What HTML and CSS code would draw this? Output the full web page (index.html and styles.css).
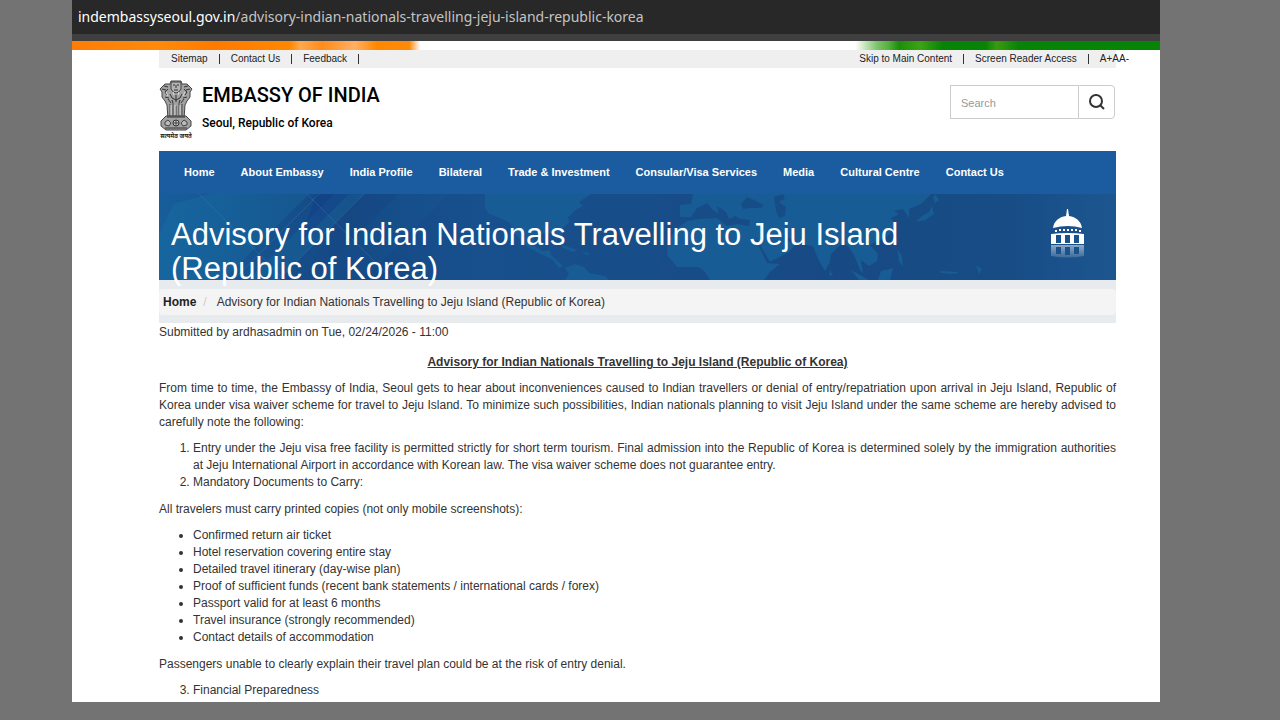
FILE: index.html
```html
<!DOCTYPE html>
<html lang="en">
<head>
  <meta charset="UTF-8">
  <meta name="viewport" content="width=device-width, initial-scale=1.0">
  <title>Embassy of India, Seoul</title>
  <link rel="stylesheet" href="styles.css">
</head>
<body>
  <div class="window">
    <div class="address"><span class="host">indembassyseoul.gov.in</span>/advisory-indian-nationals-travelling-jeju-island-republic-korea</div>
    <div class="flag"></div>

    <div class="container">
      <div class="topbar">
        <div class="links">
          <a href="#">Sitemap</a><a href="#">Contact Us</a><a href="#">Feedback</a>
        </div>
        <div class="links tools">
          <a href="#main">Skip to Main Content</a><a href="#">Screen Reader Access</a><span class="sizes"><a href="#">A+</a><a href="#">A</a><a href="#">A-</a></span>
        </div>
      </div>

      <header class="header">
        <a class="brand" href="#">
          <svg class="emblem" viewBox="0 0 34 60" aria-hidden="true">
            <g fill="#a2a2a2" stroke="#444" stroke-width="1">
              <path d="M6 4 L11 4 L12 1 H22 L23 4 L28 4 L33 9 L31 12 L31 17 L28 21 L26 25 L25 39 H9 L8 25 L6 21 L3 17 L3 12 L1 9 Z"/>
              <path d="M7 36 H27 L32 41 V46 L27 50 H7 L2 46 V41 Z"/>
            </g>
            <path d="M12 2 H22 V9 Q20 13 17 13 Q14 13 12 9 Z" fill="#b4b4b4" stroke="#444"/>
            <path d="M14 5h2M18 5h2M17 5v3M15 10h4M5 6l4 1M29 6l-4 1M3 9l4 1M31 9l-4 1M9 9l-3 3 2 3M25 9l3 3-2 3M11 14l2 4 4 2 4-2 2-4M6 17l4 1M28 17l-4 1M9 19l3 4M25 19l-3 4M13 20l1 3M21 20l-1 3M17 15v7" fill="none" stroke="#333" stroke-width="1"/>
            <path d="M11 24v12M14 23v13M20 23v13M23 24v12M17 26v10" stroke="#444" stroke-width="1"/>
            <path d="M12 25v10M16 25v10M21 25v10M7 12l2 4M26 12l-2 4M14 12l1 3M20 12l-1 3" stroke="#ddd" stroke-width="1"/>
            <circle cx="17" cy="43" r="3" fill="#ccc" stroke="#333"/>
            <path d="M17 40v6M14 43h6M6 42l3-2 3 3-2 3-4-1zM28 42l-3-2-3 3 2 3 4-1z" fill="#bbb" stroke="#444" stroke-width="1"/>
            <path d="M6 48h22M8 37h18" stroke="#333"/>
            <text class="motto" x="17" y="58" text-anchor="middle">सत्यमेव जयते</text>
          </svg>
          <span class="brand-text">
            <strong class="name">EMBASSY OF INDIA</strong>
            <span class="city">Seoul, Republic of Korea</span>
          </span>
        </a>
        <form class="search">
          <input type="text" placeholder="Search" aria-label="Search">
          <button type="button" aria-label="Search">
            <svg viewBox="0 0 16 16" width="16" height="16" fill="none" stroke="#333" stroke-width="2"><circle cx="7" cy="7" r="6"/><path d="M11 11l4 4"/></svg>
          </button>
        </form>
      </header>

      <nav class="nav">
        <a href="#">Home</a>
        <a href="#">About Embassy</a>
        <a href="#">India Profile</a>
        <a href="#">Bilateral</a>
        <a href="#">Trade &amp; Investment</a>
        <a href="#">Consular/Visa Services</a>
        <a href="#">Media</a>
        <a href="#">Cultural Centre</a>
        <a href="#">Contact Us</a>
      </nav>

      <div class="banner">
        <svg class="map" viewBox="0 0 957 86" preserveAspectRatio="none" aria-hidden="true">
          <!-- light beams -->
          <g fill="#1a85b0" opacity="0.2">
            <path d="M15 10 L50 0 H105 L20 86 H0 V40 Z"/>
            <path d="M80 0 H150 L64 86 H0 Z"/>
            <path d="M175 0 H205 L119 86 H89 Z"/>
            <path d="M240 0 H290 L204 86 H154 Z" opacity="0.4"/>
          </g>
          <path d="M157 0 H190 L140 50 Z" fill="#123a86" opacity="0.4"/>
          <path d="M40 0 L126 86 M148 0 L234 86 M205 0 L119 86 M160 0 L74 86" stroke="#4b8fc0" opacity="0.25" fill="none"/>
          <!-- continents -->
          <g fill="#185c95">
            <path d="M326 0 L326 14 L330 20 L341 24 L351 29 L354 38 L364 48 L370 54 L384 61 L394 66 L400 74 L404 72 L392 61 L391 56 L383 57 L376 52 L374 44 L380 40 L391 39 L398 40 L402 48 L404 46 L402 36 L410 28 L409 23 L418 15 L424 12 L420 8 L431 1 V0 Z"/>
            <path d="M404 51 L418 56 L414 58 L402 53 Z M422 58 L431 59 L428 61 Z"/>
            <path d="M406 74 L416 70 L425 73 L430 79 L446 82 L450 86 H406 L410 80 Z"/>
            <path d="M534 0 L532 10 L521 11 L521 23 L532 23 L538 14 L548 9 L554 16 L560 20 L558 12 L567 18 L570 25 L576 22 L582 25 L591 26 L590 32 L578 30 L568 32 L558 24 L540 25 L528 27 L519 34 L509 46 L508 61 L518 73 L540 73 L546 78 L551 86 H605 L611 78 L621 70 L608 69 L598 48 L596 42 L611 68 L630 58 L637 50 L629 47 L624 41 L641 50 L654 52 L659 65 L666 77 L671 68 L672 60 L683 49 L689 52 L695 61 L701 76 L704 79 L702 66 L710 72 L718 67 L719 60 L711 51 L718 47 L728 43 L737 32 L732 24 L740 20 L735 17 L744 15 L750 24 L750 15 L762 10 L772 0 Z"/>
            <path d="M776 0 L780 6 L776 9 L774 4 Z M773 12 L775 20 L766 26 L757 28 L763 22 L770 18 Z M736 42 L739 47 L736 50 Z M738 55 L743 62 L744 73 L740 67 Z M692 76 L710 86 H700 Z M722 77 L734 74 L731 86 H719 Z M781 77 L800 78 L796 80 L782 79 Z M817 71 L823 75 L820 80 Z M671 76 L674 82 L670 81 Z"/>
          </g>
          <g fill="#174d87">
            <path d="M582 10 L588 3 L595 6 L605 11 L602 14 L591 14 L584 15 Z"/>
            <path d="M615 3 L624 0 L626 4 L620 8 L627 13 L626 22 L620 24 L617 17 Z"/>
          </g>
        </svg>
        <h1>Advisory for Indian Nationals Travelling to Jeju Island (Republic of Korea)</h1>
        <svg class="dome" viewBox="0 0 36 52" aria-hidden="true">
          <defs>
            <linearGradient id="fade" x1="0" y1="0" x2="0" y2="1">
              <stop offset="0" stop-color="#fff" stop-opacity="0.5"/>
              <stop offset="1" stop-color="#fff" stop-opacity="0.15"/>
            </linearGradient>
          </defs>
          <path d="M17 0 H18 L19 7 C26 8 31 12 32 19 Q18 15 3 19 C4 12 9 8 16 7 Z" fill="#fff"/>
          <path d="M5 22h2M9 21h2M13 21h2M17 21h2M21 21h2M25 21h2M29 22h2" stroke="#fff" stroke-width="2"/>
          <path d="M1 25 Q18 23 34 25 V35 H1 Z M6 26 V34 H11 V26 Z M15 26 V34 H20 V26 Z M24 26 V34 H29 V26 Z" fill="#fff" fill-rule="evenodd"/>
          <path d="M1 36 H34 V47 Q18 50 1 47 Z M6 38 V45 H11 V38 Z M15 38 V46 H20 V38 Z M24 38 V45 H29 V38 Z" fill="url(#fade)" fill-rule="evenodd"/>
        </svg>
      </div>

      <div class="crumbs">
        <ol>
          <li><a href="#">Home</a></li>
          <li>Advisory for Indian Nationals Travelling to Jeju Island (Republic of Korea)</li>
        </ol>
      </div>

      <main id="main" class="content">
        <div class="submitted">Submitted by ardhasadmin on Tue, 02/24/2026 - 11:00</div>
        <h2>Advisory for Indian Nationals Travelling to Jeju Island (Republic of Korea)</h2>
        <p>From time to time, the Embassy of India, Seoul gets to hear about inconveniences caused to Indian travellers or denial of entry/repatriation upon arrival in Jeju Island, Republic of Korea under visa waiver scheme for travel to Jeju Island. To minimize such possibilities, Indian nationals planning to visit Jeju Island under the same scheme are hereby advised to carefully note the following:</p>
        <ol>
          <li>Entry under the Jeju visa free facility is permitted strictly for short term tourism. Final admission into the Republic of Korea is determined solely by the immigration authorities at Jeju International Airport in accordance with Korean law. The visa waiver scheme does not guarantee entry.</li>
          <li>Mandatory Documents to Carry:</li>
        </ol>
        <p>All travelers must carry printed copies (not only mobile screenshots):</p>
        <ul>
          <li>Confirmed return air ticket</li>
          <li>Hotel reservation covering entire stay</li>
          <li>Detailed travel itinerary (day-wise plan)</li>
          <li>Proof of sufficient funds (recent bank statements / international cards / forex)</li>
          <li>Passport valid for at least 6 months</li>
          <li>Travel insurance (strongly recommended)</li>
          <li>Contact details of accommodation</li>
        </ul>
        <p>Passengers unable to clearly explain their travel plan could be at the risk of entry denial.</p>
        <ol start="3" class="last">
          <li>Financial Preparedness</li>
        </ol>
      </main>
    </div>
  </div>
</body>
</html>
```
FILE: styles.css
```css
* {box-sizing: border-box;}
body {margin: 0; background: #737373; color: #333; font: 12px/17px "Liberation Sans", Arial, sans-serif;}
a {color: inherit; text-decoration: none;}

.window {margin: 0 120px 18px 72px; background: #fff;}
.address {padding: 0 6px; height: 41px; background: #282828; border-bottom: 7px solid #3f3f3f; color: #c4c4c4; font: 14px/33px "Noto Sans", "Open Sans", sans-serif; white-space: nowrap; overflow: hidden;}
.host {color: #fff;}
.flag {height: 9px; background: linear-gradient(90deg, #ff7d05 0, #ff8a0a 8%, #ff7a00 13%, #ff8800 20%, #ffa94d 21%, #ff8c1a 23%, #ffb066 26%, #ff8800 28%, #ff8a0a 31%, #fff 32%, #fff 72%, #7cc36c 74%, #5ab13f 75%, #1a8f0c 76%, #3da314 78%, #078406 80%, #078406 84%, #3a9a10 85%, #078406 87%, #078406 100%);}
.container {padding: 0 44px 0 87px;}

.topbar {display: flex; justify-content: space-between; height: 18px; padding-left: 12px; background: #efefef; color: #222; font-size: 10px; line-height: 18px; white-space: nowrap;}
.links > a::after {content: ""; display: inline-block; height: 10px; margin: 0 11px; border-left: 1px solid #333; vertical-align: -2px;}
.tools {margin-right: -13px;}

.header {display: flex; justify-content: space-between; align-items: flex-start; height: 83px; padding-top: 12px;}
.brand {display: flex; gap: 9px; color: #000; font-family: Roboto, sans-serif;}
.emblem {width: 34px; height: 60px;}
.motto {font: bold 6px "Noto Sans", sans-serif; fill: #222;}
.brand-text {display: flex; flex-direction: column; gap: 7px;}
.name {font-size: 20px; line-height: 30px; font-weight: 500;}
.city {font-size: 12px; line-height: 12px; font-weight: 500;}
.search {display: flex; margin: 5px 1px 0 0;}
.search input {width: 128px; height: 34px; padding: 2px 10px 0; border: 1px solid #ccc; border-right: 0; font: 11px "Liberation Sans", Arial, sans-serif;}
.search input::placeholder {color: #999;}
.search button {display: flex; align-items: center; justify-content: center; width: 37px; height: 34px; padding: 0; border: 1px solid #ccc; border-radius: 0 4px 4px 0; background: #fff;}

.nav {display: flex; gap: 26px; padding: 0 25px; background: #1a5c9f; color: #fff; font-size: 11px; font-weight: bold; line-height: 43px; white-space: nowrap;}

.banner {position: relative; display: flex; justify-content: space-between; height: 86px; padding: 15px 30px 0 12px; background: linear-gradient(90deg, #175e9b 0, #154783 20%, #17508d 33%, #174a84 70%, #174c85 88%, #1d568f 100%);}
.map {position: absolute; inset: 0; width: 100%; height: 100%;}
.banner h1 {position: relative; max-width: 800px; margin: 9px 0 0; color: #fff; font-size: 31px; font-weight: normal; line-height: 34px; z-index: 1;}
.dome {position: relative; width: 36px; height: 52px;}

.crumbs {padding: 9px 0 8px; background: #e7ebee;}
.crumbs ol {display: flex; margin: 0; padding: 4px; border-radius: 4px; background: #f4f4f4; line-height: 18px; list-style: none;}
.crumbs a {color: #222; font-weight: bold;}
.crumbs li + li::before {content: "/"; padding: 0 10px 0 7px; color: #ccc;}

.content {padding: 1px 0 3px; text-align: justify;}
.submitted {margin-bottom: 13px;}
.content h2 {margin: 0 0 9px; font-size: 12px; line-height: 17px; text-align: center; text-decoration: underline;}
.content p {margin: 0 0 9px;}
.content ol, .content ul {margin: 0 0 10px; padding-left: 34px;}
.content .last {margin: 0;}
```
